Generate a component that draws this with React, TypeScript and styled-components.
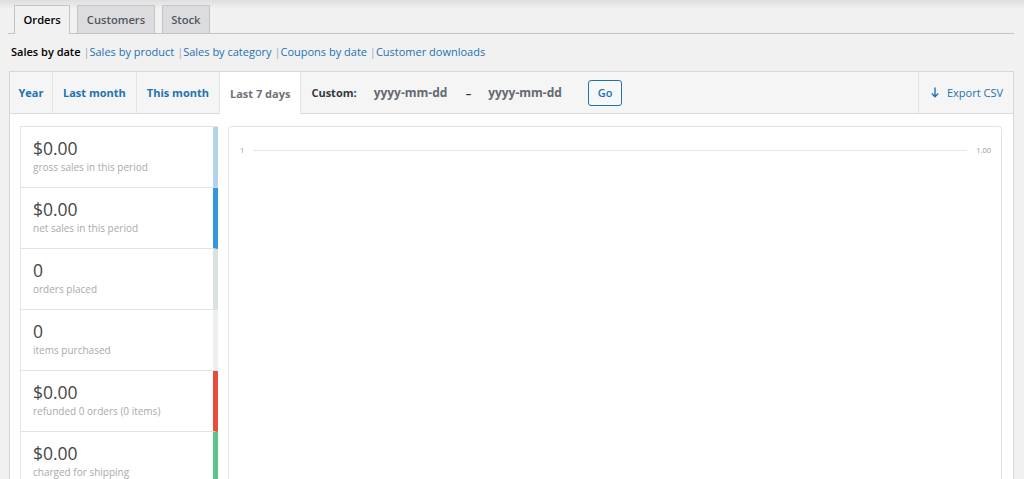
import React from 'react'
import styled, { createGlobalStyle } from 'styled-components'

const GlobalStyle = createGlobalStyle`
    html {
        overflow: hidden;
    }
    body {
        margin: 0;
        background: linear-gradient(to bottom, #dedede 0, #f1f1f1 9px) no-repeat, #f1f1f1;
        font-family: "Open Sans", "Liberation Sans", sans-serif;
        color: #3c434a;
    }
`

const StyledWrap = styled.div`
    padding: 5px 10px 0 9px;
`

const StyledNavTabs = styled.div`
    display: flex;
    gap: 7px;
    padding-left: 6px;
    border-bottom: 1px solid #c3c4c7;
    margin-left: -1px;
`

const StyledNavTab = styled.a<{ $active?: boolean }>`
    display: block;
    padding: 0 8.5px;
    line-height: 27px;
    font-size: 11.2px;
    font-weight: 600;
    text-decoration: none;
    border: 1px solid #c3c4c7;
    border-bottom: none;
    margin-bottom: ${p => (p.$active ? '-1px' : '0')};
    background: ${p => (p.$active ? '#f1f1f1' : '#dcdcde')};
    color: ${p => (p.$active ? '#000' : '#50575e')};
    padding-bottom: ${p => (p.$active ? '1px' : '0')};
`

const StyledSubNav = styled.ul`
    display: flex;
    list-style: none;
    margin: 9px 0 0 2px;
    padding: 0;
    font-size: 11px;
    line-height: 18px;
    color: #a7aaad;
`

const StyledSubItem = styled.li`
    white-space: pre;
`

const StyledSubLink = styled.a<{ $current?: boolean }>`
    text-decoration: none;
    color: ${p => (p.$current ? '#000' : '#2271b1')};
    font-weight: ${p => (p.$current ? 600 : 400)};
`

const StyledPostbox = styled.div`
    margin-top: 10px;
    border: 1px solid #d6d7d9;
    background: #fff;
`

const StyledHeader = styled.div`
    display: flex;
    height: 41px;
    background: #f5f5f5;
    border-bottom: 1px solid #dcdcde;
`

const StyledRange = styled.a<{ $active?: boolean }>`
    display: flex;
    align-items: center;
    padding: 0 10px;
    font-size: 11px;
    font-weight: 700;
    text-decoration: none;
    border-right: 1px solid #e4e4e4;
    background: ${p => (p.$active ? '#fff' : 'transparent')};
    color: ${p => (p.$active ? '#6d7276' : '#2271b1')};
    margin-bottom: ${p => (p.$active ? '-1px' : '0')};

    &:first-child {
        padding: 0 8.5px;
    }
`

const StyledCustom = styled.div`
    display: flex;
    align-items: center;
    padding-left: 10px;
    font-size: 11px;
    font-weight: 700;
    color: #32373c;
`

const StyledDateInput = styled.span`
    margin-left: 17px;
    color: #646970;
    font-size: 12px;
    width: 74px;
`

const StyledDash = styled.span`
    margin-left: 18px;
    color: #32373c;
`

const StyledGo = styled.button`
    margin-left: 26px;
    height: 26px;
    width: 34px;
    border: 1px solid #2271b1;
    border-radius: 3px;
    background: #f6f7f7;
    color: #2271b1;
    font-family: inherit;
    font-size: 11px;
    font-weight: 600;
    padding: 0;
`

const StyledExport = styled.a`
    margin-left: auto;
    display: flex;
    align-items: center;
    gap: 8px;
    padding: 0 10px 0 12px;
    border-left: 1px solid #e4e4e4;
    color: #2271b1;
    font-size: 11px;
    text-decoration: none;
`

const StyledBody = styled.div`
    display: flex;
    gap: 10px;
    padding: 12px 11px 0 10px;
    height: 400px;
`

const StyledLegend = styled.ul`
    list-style: none;
    margin: 0;
    padding: 0;
    width: 197px;
    flex: none;
    border-top: 1px solid #e3e3e3;
    border-left: 1px solid #e3e3e3;
`

const StyledLegendItem = styled.li<{ $color: string }>`
    padding: 10px 12px 11px 12px;
    border-bottom: 1px solid #e3e3e3;
    border-right: 5px solid ${p => p.$color};
    height: 39px;
`

const StyledValue = styled.div`
    font-size: 17.5px;
    line-height: 22px;
    color: #464646;
`

const StyledLabel = styled.div`
    font-size: 10px;
    line-height: 17px;
    color: #aaa;
`

const StyledChart = styled.div`
    flex: 1;
    border: 1px solid #e3e3e3;
    border-bottom: none;
    border-radius: 4px 4px 0 0;
    padding: 18px 10px 0 11px;
`

const StyledAxisRow = styled.div`
    display: flex;
    align-items: center;
    gap: 9px;
    font-size: 7.5px;
    color: #999;
`

const StyledGridLine = styled.div`
    flex: 1;
    height: 1px;
    background: #e6e6e6;
`

const legendItems = [
    { value: '$0.00', label: 'gross sales in this period', color: '#b1d4ea' },
    { value: '$0.00', label: 'net sales in this period', color: '#3498db' },
    { value: '0', label: 'orders placed', color: '#dbe1e3' },
    { value: '0', label: 'items purchased', color: '#ecf0f1' },
    { value: '$0.00', label: 'refunded 0 orders (0 items)', color: '#e74c3c' },
    { value: '$0.00', label: 'charged for shipping', color: '#5cc488' },
    { value: '$0.00', label: 'worth of coupons used', color: '#f1c40f' },
]

const subLinks = ['Sales by date', 'Sales by product', 'Sales by category', 'Coupons by date', 'Customer downloads']

const App = () => {
    return (
        <>
            <GlobalStyle />
            <StyledWrap>
                <StyledNavTabs>
                    <StyledNavTab $active>Orders</StyledNavTab>
                    <StyledNavTab>Customers</StyledNavTab>
                    <StyledNavTab>Stock</StyledNavTab>
                </StyledNavTabs>

                <StyledSubNav>
                    {subLinks.map((link, i) => (
                        <StyledSubItem key={link}>
                            <StyledSubLink $current={i === 0}>{link}</StyledSubLink>
                            {i < subLinks.length - 1 ? ' |' : ''}
                        </StyledSubItem>
                    ))}
                </StyledSubNav>

                <StyledPostbox>
                    <StyledHeader>
                        <StyledRange>Year</StyledRange>
                        <StyledRange>Last month</StyledRange>
                        <StyledRange>This month</StyledRange>
                        <StyledRange $active>Last 7 days</StyledRange>
                        <StyledCustom>
                            Custom:
                            <StyledDateInput>yyyy-mm-dd</StyledDateInput>
                            <StyledDash>–</StyledDash>
                            <StyledDateInput>yyyy-mm-dd</StyledDateInput>
                            <StyledGo>Go</StyledGo>
                        </StyledCustom>
                        <StyledExport>
                            <svg width="8" height="11" viewBox="0 0 8 11" fill="none" stroke="#2271b1" strokeWidth="1.4">
                                <path d="M4 0.5v9.2M0.8 6.6L4 9.8l3.2-3.2" />
                            </svg>
                            Export CSV
                        </StyledExport>
                    </StyledHeader>

                    <StyledBody>
                        <StyledLegend>
                            {legendItems.map((item, i) => (
                                <StyledLegendItem key={i} $color={item.color}>
                                    <StyledValue>{item.value}</StyledValue>
                                    <StyledLabel>{item.label}</StyledLabel>
                                </StyledLegendItem>
                            ))}
                        </StyledLegend>
                        <StyledChart>
                            <StyledAxisRow>
                                <span>1</span>
                                <StyledGridLine />
                                <span>1.00</span>
                            </StyledAxisRow>
                        </StyledChart>
                    </StyledBody>
                </StyledPostbox>
            </StyledWrap>
        </>
    )
}

export default App
